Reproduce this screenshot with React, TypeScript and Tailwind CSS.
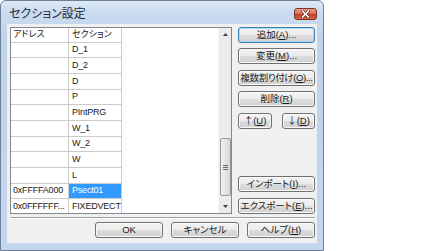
import React from 'react';

interface Row {
    addr: string;
    sec: string;
    h: string;
    selected?: boolean;
}

const rows: Row[] = [
    { addr: '', sec: 'D_1', h: 'h-[15px]' },
    { addr: '', sec: 'D_2', h: 'h-[16px]' },
    { addr: '', sec: 'D', h: 'h-[16px]' },
    { addr: '', sec: 'P', h: 'h-[15px]' },
    { addr: '', sec: 'PIntPRG', h: 'h-[16px]' },
    { addr: '', sec: 'W_1', h: 'h-[16px]' },
    { addr: '', sec: 'W_2', h: 'h-[15px]' },
    { addr: '', sec: 'W', h: 'h-[16px]' },
    { addr: '', sec: 'L', h: 'h-[16px]' },
    { addr: '0xFFFFA000', sec: 'Psect01', h: 'h-[15px]', selected: true },
    { addr: '0x0FFFFFF...', sec: 'FIXEDVECT', h: 'h-[16px]' },
];

const Btn: React.FC<{ children: React.ReactNode; primary?: boolean; className?: string }> = ({
    children,
    primary,
    className = ''
}) => (
    <div
        className={`h-[16px] flex items-center justify-center rounded-[3px] border text-[9.5px] leading-none text-[#1a1a1a] whitespace-nowrap bg-[linear-gradient(#f3f3f3_0%,#ebebeb_48%,#dddddd_52%,#d0d0d0_100%)] ${primary
            ? 'border-[#3c7fb1] shadow-[inset_0_0_0_1px_#a8dcf8]'
            : 'border-[#707070] shadow-[inset_0_0_0_1px_#fafafa]'
            } ${className}`}
    >
        {children}
    </div>
);

const U: React.FC<{ children: React.ReactNode }> = ({ children }) => (
    <span className="underline underline-offset-1">{children}</span>
);

export default function App() {
    return (
        <div className="w-[434px] h-[251px] bg-white overflow-hidden font-['Liberation_Sans','Noto_Sans_CJK_JP',sans-serif] [font-feature-settings:'palt']">
            <div className="w-[324px] h-[251px] rounded-t-[6px] border border-[#6d7f96] bg-[linear-gradient(#dde9f6_0px,#c9dbef_12px,#bfd3eb_40px,#c3d6ed_100%)] flex flex-col">
                {/* Title bar */}
                <div className="h-[23px] flex items-center pl-[8px] pr-[6px]">
                    <span className="text-[12px] text-[#1e2b3c] mt-[2px]">セクション設定</span>
                    <div className="ml-auto mt-[3px] w-[23px] h-[12px] rounded-[3px] border border-[#7b3326] bg-[linear-gradient(#e8a08f_0%,#d5705a_45%,#c2432a_55%,#d2664a_100%)] flex items-center justify-center">
                        <svg width="9" height="8" viewBox="0 0 9 8">
                            <path d="M1.5 1 L7.5 7 M7.5 1 L1.5 7" stroke="#5a2418" strokeWidth="3" strokeLinecap="square" />
                            <path d="M1.5 1 L7.5 7 M7.5 1 L1.5 7" stroke="#ffffff" strokeWidth="1.6" strokeLinecap="square" />
                        </svg>
                    </div>
                </div>

                {/* Client area */}
                <div className="flex-1 mx-[6px] mb-[7px] bg-[#f0f0f0] pl-[3px] pr-[2px] pt-[3px] pb-[5px] flex flex-col">
                    <div className="flex gap-[6px] h-[187px]">
                        {/* List */}
                        <div className="w-[222px] h-[187px] border border-[#828790] bg-white flex overflow-hidden">
                            <div className="flex-1 overflow-hidden">
                                <div className="flex h-[15px] border-b border-[#cbcbcb] w-[111px] text-[9px] text-[#1a1a1a]">
                                    <div className="w-[58px] border-r border-[#cbcbcb] pl-[2px] flex items-center">アドレス</div>
                                    <div className="w-[53px] border-r border-[#cbcbcb] pl-[3px] flex items-center">セクション</div>
                                </div>
                                {rows.map((r, i) => (
                                    <div key={i} className={`flex w-[111px] border-b border-[#cbcbcb] ${r.h} text-[9px] tracking-[-0.2px] text-[#1a1a1a]`}>
                                        <div className="w-[58px] border-r border-[#cbcbcb] pl-[2px] flex items-center whitespace-nowrap overflow-hidden">
                                            {r.addr}
                                        </div>
                                        <div
                                            className={`w-[53px] border-r border-[#cbcbcb] pl-[3px] flex items-center whitespace-nowrap overflow-hidden ${r.selected ? 'bg-[#3399ff] text-white' : ''
                                                }`}
                                        >
                                            {r.sec}
                                        </div>
                                    </div>
                                ))}
                            </div>

                            {/* Scrollbar */}
                            <div className="w-[13px] bg-[#ececec] border-l border-[#f4f4f4] flex flex-col items-center">
                                <div className="h-[13px] flex items-center justify-center">
                                    <svg width="5" height="3" viewBox="0 0 5 3">
                                        <path d="M0 3 L2.5 0 L5 3 Z" fill="#404040" />
                                    </svg>
                                </div>
                                <div className="mt-[97px] w-[11px] h-[58px] rounded-[2px] border border-[#989898] bg-[linear-gradient(90deg,#f2f2f2,#e4e4e4_50%,#d6d6d6)] flex flex-col items-center justify-center gap-[1px]">
                                    <div className="w-[5px] h-px bg-[#6a6a6a]" />
                                    <div className="w-[5px] h-px bg-[#6a6a6a]" />
                                    <div className="w-[5px] h-px bg-[#6a6a6a]" />
                                </div>
                                <div className="mt-auto h-[13px] flex items-center justify-center">
                                    <svg width="5" height="3" viewBox="0 0 5 3">
                                        <path d="M0 0 L2.5 3 L5 0 Z" fill="#404040" />
                                    </svg>
                                </div>
                            </div>
                        </div>

                        {/* Right buttons */}
                        <div className="w-[77px] flex flex-col">
                            <Btn primary>追加(<U>A</U>)...</Btn>
                            <Btn className="mt-[5px]">変更(<U>M</U>)...</Btn>
                            <Btn className="mt-[6px] tracking-[-0.4px]">複数割り付け(<U>O</U>)...</Btn>
                            <Btn className="mt-[5px]">削除(<U>R</U>)</Btn>
                            <div className="mt-[6px] flex gap-[10px]">
                                <Btn className="w-[34px]"><span className="font-['Noto_Sans_CJK_JP']">↑</span>(<U>U</U>)</Btn>
                                <Btn className="w-[33px]"><span className="font-['Noto_Sans_CJK_JP']">↓</span>(<U>D</U>)</Btn>
                            </div>
                            <Btn className="mt-auto">インポート(<U>I</U>)...</Btn>
                            <Btn className="mt-[6px]">エクスポート(<U>E</U>)...</Btn>
                        </div>
                    </div>

                    {/* Separator */}
                    <div className="mt-[3px] h-[2px] border-t border-[#a0a0a0] border-b border-b-white" />

                    {/* Bottom buttons */}
                    <div className="mt-[3px] flex justify-end gap-[8px]">
                        <Btn className="w-[68px]">OK</Btn>
                        <Btn className="w-[68px]">キャンセル</Btn>
                        <Btn className="w-[68px]">ヘルプ(<U>H</U>)</Btn>
                    </div>
                </div>
            </div>
        </div>
    );
}
